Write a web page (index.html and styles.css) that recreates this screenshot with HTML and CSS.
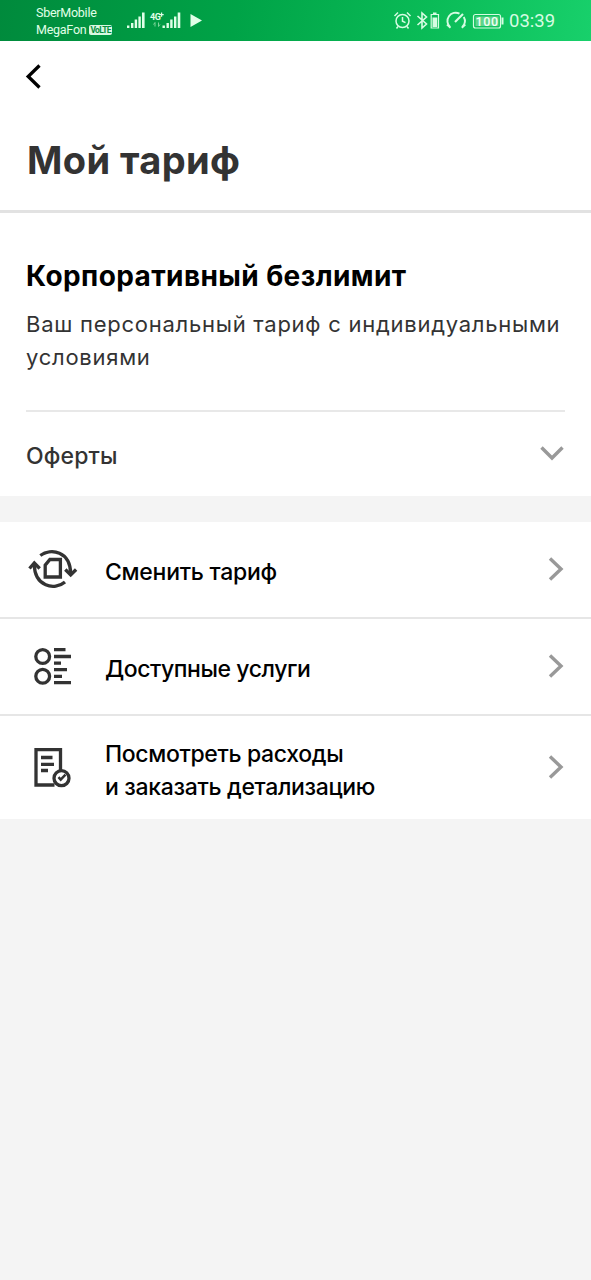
FILE: index.html
```html
<!DOCTYPE html>
<html lang="ru">
<head>
<meta charset="utf-8">
<title>Мой тариф</title>
<link rel="stylesheet" href="styles.css">
</head>
<body>
<div class="status">
  <div class="carriers">
    <div><span class="sber">SberMobile</span></div>
    <div class="mega-line"><span class="mega">MegaFon</span><span class="volte">VoLTE</span></div>
  </div>
  <svg class="signals" width="80" height="22" viewBox="0 0 80 22" fill="#e0ffe8">
    <path d="M1 15.500h2.400V18H1zM5 13h2.400v5H5zM8.700 9.500h2.400V18H8.700zM12.400 6.500h2.400V18h-2.400zM16 2.500h2.600V18H16z"/>
    <text class="net" x="24" y="9.500">4G</text><path d="M35 2.500h1.200V4h1.500v1.200h-1.500v1.500H35V5.200h-1.500V4H35z"/>
    <path d="M29 12.500v4M27.500 14.500 29 12.500M32.500 12.500v4M34 14.500l-1.500 2" fill="none" stroke="#7fd69a"/>
    <path d="M36.500 15.500h2.400V18h-2.400zM40.500 13h2.400v5h-2.400zM44.200 9.500h2.400V18h-2.400zM48 6.500h2.400V18H48zM51.700 2.500h2.600V18h-2.600zM64.500 4 76 10.500 64.500 17z"/>
  </svg>
  <svg class="sysicons" width="126" height="24" viewBox="0 0 126 24" fill="none" stroke="#d5fce2" stroke-width="1.500">
    <circle cx="10.500" cy="12" r="6.500"/><path d="M10.500 8v4.200l3 1.500M2.500 7 6 3.500M18.500 7 15 3.500M6 17.500 4.500 19.500M15 17.500l1.500 2"/>
    <path d="M25.500 7 34.500 15 30 19V4l4.500 4-9 8" stroke-width="1.600"/>
    <path d="M39.200 5.500h7.300V19h-7.300z" stroke-width="1.200"/><path d="M41 3.500h3.500V5H41zM40.500 8.500h4.700V18h-4.700z" fill="#d5fce2" stroke="none"/>
    <path d="M58 18A8.300 8.300 0 0 1 67.500 4.600M71.800 8a8.500 8.500 0 0 1-1.500 10M55 15.500l3.500 3.300M73.300 15.500l-3.500 3.300" stroke-width="1.900"/><path d="M63 13 71 5" stroke-width="2.200"/>
    <rect x="81.500" y="5.500" width="27" height="13.500" rx="2" stroke-width="1.200"/><path d="M83.500 7.500h23V17h-23z" fill="#5fd48a" stroke="none"/><path d="M110.500 8.500v7" stroke-width="2"/>
    <text class="pct" x="83.500" y="16.700">100</text>
  </svg>
  <div class="clock"><span class="time">03:39</span></div>
</div>
<header class="header">
  <svg class="back" width="16" height="26" viewBox="0 0 16 26" fill="none" stroke="#000" stroke-width="3.300"><path d="M14.500 1.500 3.200 12.500 14.500 23.500"/></svg>
  <h1><span class="t-title">Мой тариф</span></h1>
</header>
<section class="plan">
  <h2><span class="t-plan">Корпоративный безлимит</span></h2>
  <p><span class="t-d1">Ваш персональный тариф с индивидуальными</span><br><span class="t-d2">условиями</span></p>
  <div class="offers"><span class="t-off">Оферты</span>
    <svg class="down" width="24" height="16" viewBox="0 0 24 16" fill="none" stroke="#999" stroke-width="3.400"><path d="M1.500 2.500 12 13 22.500 2.500"/></svg>
  </div>
</section>
<nav class="menu">
  <div class="row">
    <svg class="ico" width="50" height="44" viewBox="0 0 50 44" fill="none" stroke="#333" stroke-width="3.300">
      <path d="M12.300 8.500C23 .8 42.500 4 42.700 27M37 35C26.500 44 6.300 39.500 6.300 17"/><path d="m37.300 22.500 5.400 5.500 5.400-5.500M1.500 21.500l4.800-5.500 5.400 5.500"/>
      <path d="M17.200 30V18.200l4.700-5.700h10.500V30z"/>
    </svg>
    <span class="label"><span class="t-r1">Сменить тариф</span></span>
    <svg class="go" width="16" height="24" viewBox="0 0 16 24" fill="none" stroke="#999" stroke-width="3.400"><path d="M2 1.500 13 12 2 22.500"/></svg>
  </div>
  <div class="row">
    <svg class="ico" width="50" height="44" viewBox="0 0 50 44" fill="none" stroke="#333" stroke-width="3.300">
      <circle cx="14.700" cy="12.500" r="6.900"/><circle cx="14.700" cy="32.200" r="6.900"/>
      <path d="M26 5.700h11.500M26 12.500h17M26 19.100h7M26 25.700h13M26 32.400h8M26 38.700h17"/>
    </svg>
    <span class="label"><span class="t-r2">Доступные услуги</span></span>
    <svg class="go" width="16" height="24" viewBox="0 0 16 24" fill="none" stroke="#999" stroke-width="3.400"><path d="M2 1.500 13 12 2 22.500"/></svg>
  </div>
  <div class="row tall">
    <svg class="ico" width="50" height="44" viewBox="0 0 50 44" fill="none" stroke="#333" stroke-width="3.300">
      <path d="M26.500 40H8V4.700h24.500v21M13 12.500h11.500M13 19.300h13M13 25.500h7"/><circle cx="33.500" cy="33.200" r="7.500"/><path d="m30.500 32.200 2.200 2.500 4.800-5" stroke-width="2.500"/>
    </svg>
    <span class="label"><span class="t-r3">Посмотреть расходы</span><br><span class="t-r4">и заказать детализацию</span></span>
    <svg class="go" width="16" height="24" viewBox="0 0 16 24" fill="none" stroke="#999" stroke-width="3.400"><path d="M2 1.500 13 12 2 22.500"/></svg>
  </div>
</nav>
</body>
</html>
```

FILE: styles.css
```css
* { box-sizing: border-box; }
body { margin: 0; min-height: 1280px; background: #f4f4f4; font-family: Inter, "Liberation Sans", sans-serif; color: #000; }
svg { display: block; flex: none; }
h1, h2, p { margin: 0; }
span { white-space: nowrap; }
.status { height: 41px; display: flex; background: linear-gradient(100deg, #008a3c 0%, #00a347 40%, #0abb57 72%, #18d06b 100%); font-family: Roboto, sans-serif; color: #e0ffe8; }
.carriers { width: 90px; padding: 4px 0 0 36px; font-size: 12.5px; line-height: 17px; letter-spacing: -.25px; }
.mega-line { display: flex; align-items: center; gap: 3px; }
.volte { background: #d8f8e2; color: #078f42; font-size: 8.5px; line-height: 10px; font-weight: 700; border-radius: 2px; width: 23px; padding: 0 1px; letter-spacing: -.7px; }
.signals { margin: 10px 0 0 36px; }
.net { font: 700 9px Roboto, sans-serif; letter-spacing: -.5px; }
.sysicons { margin: 9px 0 0 auto; }
.pct { font: 500 12.5px Roboto, sans-serif; fill: #f0fff5; stroke: none; letter-spacing: .6px; }
.clock { width: 82px; margin-left: -9px; font-size: 18.5px; line-height: 42px; color: #d5fce2; }
.header { height: 172px; padding: 23px 27px 0; background: #fff; border-bottom: 3px solid #e2e2e2; }
.back { margin-left: -2px; }
h1 { margin-top: 47px; font-size: 38px; line-height: 46px; font-weight: 700; color: #333; letter-spacing: .4px; }
.plan { height: 283px; padding: 43px 26px 0; background: #fff; }
h2 { font-size: 28px; line-height: 40px; font-weight: 700; letter-spacing: .4px; }
p { margin-top: 12px; font-size: 22px; line-height: 33px; color: #333; letter-spacing: .74px; }
.offers { margin-top: 36px; border-top: 2px solid #e8e8e8; height: 87px; display: flex; justify-content: space-between; align-items: center; font-size: 23px; font-weight: 500; color: #333; letter-spacing: .15px; padding-top: 2px; }
.down { margin: -5px 1px 0 0; }
.menu { margin-top: 26px; }
.row { height: 97px; display: flex; align-items: center; background: #fff; border-bottom: 2px solid #e6e6e6; padding: 0 27px 0 28px; font-size: 23px; line-height: 33px; font-weight: 500; }
.row.tall { height: 103px; border: 0; }
.ico { width: 50px; margin: -1px 27px 0 0; }
.label { flex: 1; padding-top: 6px; }
.t-r1 { letter-spacing: -.27px; }
.t-r2 { letter-spacing: -.44px; }
.t-r3 { letter-spacing: -.35px; }
.t-r4 { letter-spacing: -.33px; }
.go { margin-top: -1px; }
```
